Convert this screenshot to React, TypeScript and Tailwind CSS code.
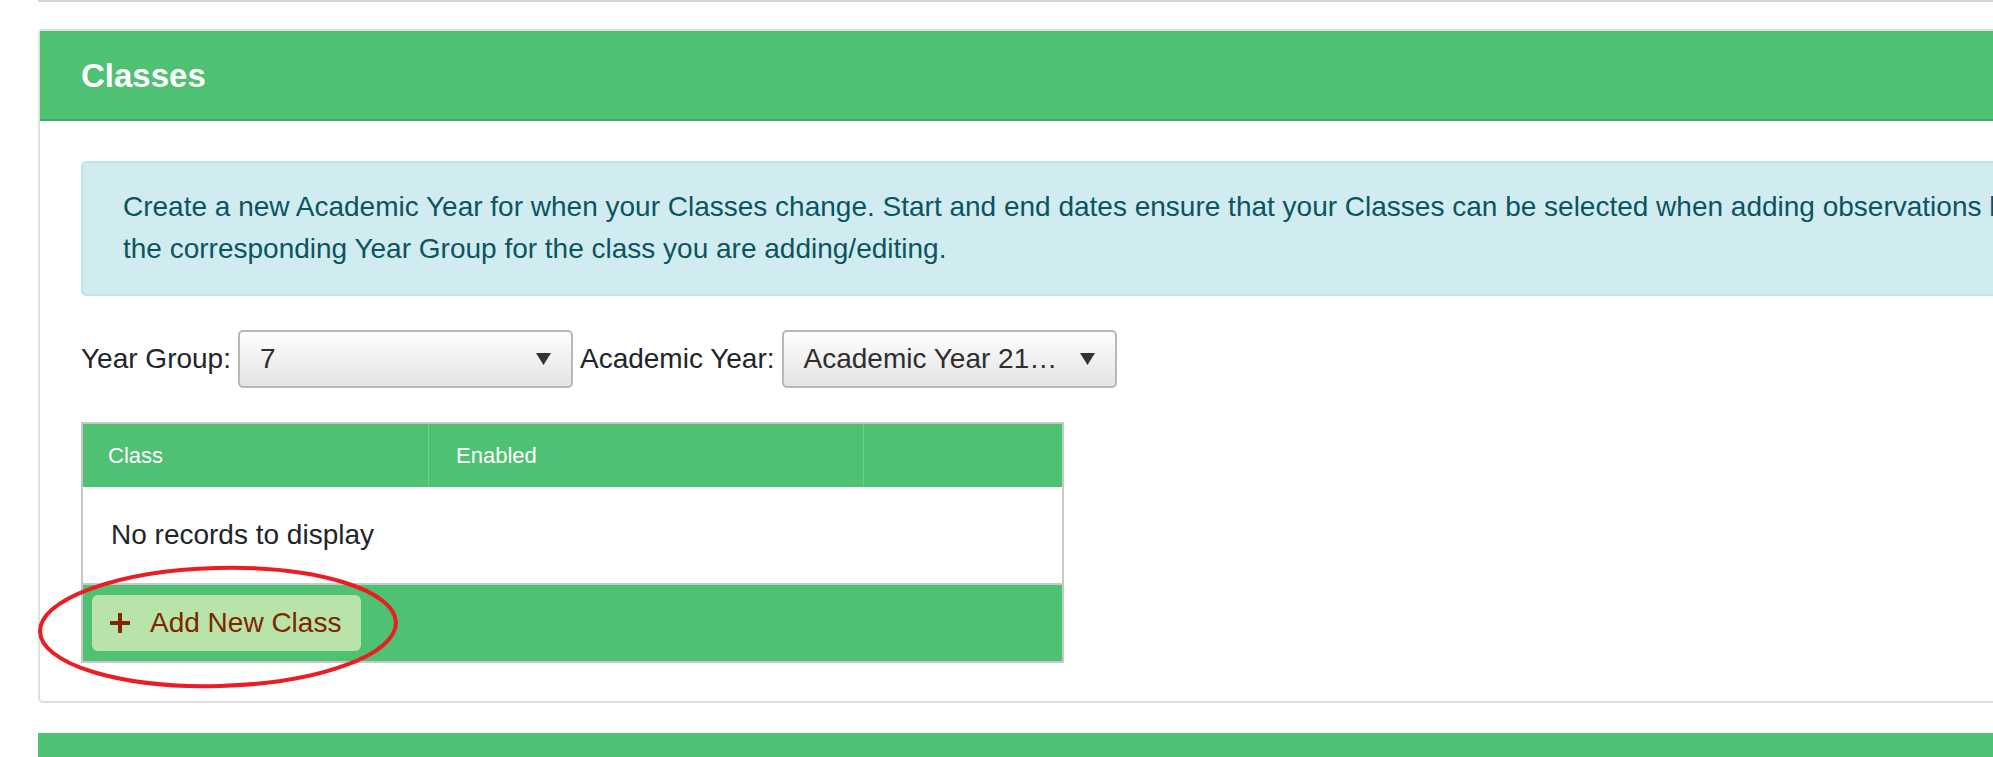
function Caret() {
  return (
    <svg width="15" height="12" viewBox="0 0 15 12" className="shrink-0">
      <polygon points="0,0 15,0 7.5,12" fill="#333333" />
    </svg>
  );
}

function PlusMark() {
  return (
    <svg width="20" height="20" viewBox="0 0 20 20" className="shrink-0">
      <rect x="0" y="8" width="20" height="4" fill="currentColor" />
      <rect x="8" y="0" width="4" height="20" fill="currentColor" />
    </svg>
  );
}

function Select({ value }: { value: string }) {
  return (
    <div className="w-[335px] h-[58px] shrink-0 border-2 border-[#b8b8b8] rounded-[5px] bg-gradient-to-b from-white to-[#e3e3e3] flex items-center justify-between pl-[20px] pr-[20px] text-[#2e2e2e]">
      <span className="whitespace-nowrap">{value}</span>
      <Caret />
    </div>
  );
}

export default function App() {
  return (
    <div className="relative w-[1993px] h-[757px] overflow-hidden bg-white font-['Liberation_Sans',Arial,sans-serif] text-[28px] text-[#212529]">
      {/* line left over from the section above */}
      <div className="ml-[38px] h-[2px] bg-[#d6d6d6]" />

      {/* Classes panel */}
      <div className="mt-[27px] ml-[38px] w-[2100px] border-2 border-[#dfdfdf] rounded-[5px]">
        <div className="h-[90px] flex items-center px-[41px] bg-[#4ec172] border-b-2 border-[#44a863]">
          <h2 className="text-[33px] font-bold text-white leading-none">Classes</h2>
        </div>

        <div className="pt-[40px] pb-[38px] px-[41px]">
          <div className="border-2 border-[#bee5eb] bg-[#d1ecf1] rounded-[5px] text-[#0c5460] leading-[42px] pl-[40px] pt-[23px] pb-[24px] whitespace-nowrap">
            Create a new Academic Year for when your Classes change. Start and end dates ensure that your Classes can be selected when adding observations by selecting
            <br />
            the corresponding Year Group for the class you are adding/editing.
          </div>

          <div className="mt-[34px] flex items-center gap-[7px]">
            <label className="whitespace-nowrap">Year Group:</label>
            <Select value="7" />
            <label className="whitespace-nowrap">Academic Year:</label>
            <Select value="Academic Year 21…" />
          </div>

          <div className="mt-[34px] w-[983px] border-2 border-[#c8c8c8]">
            <div className="h-[63px] grid grid-cols-[345px_435px_1fr] bg-[#4ec172] text-white text-[22px]">
              <div className="flex items-center pl-[25px]">Class</div>
              <div className="flex items-center pl-[27px] border-l border-white/20">Enabled</div>
              <div className="border-l border-white/20" />
            </div>
            <div className="h-[96px] flex items-center pl-[28px] bg-white">No records to display</div>
            <div className="border-t-2 border-[#c8c8c8] bg-[#4ec172] pt-[10px] pb-[10px] pl-[9px]">
              <button className="h-[56px] flex items-center gap-[20px] pl-[18px] pr-[20px] bg-[#b8e4a9] rounded-[6px] text-[28px] text-[#7f2600]">
                <PlusMark />
                <span>Add New Class</span>
              </button>
            </div>
          </div>
        </div>
      </div>

      {/* next panel header peeking in */}
      <div className="mt-[30px] ml-[38px] h-[30px] bg-[#4ec172]" />

      {/* red annotation ring */}
      <svg className="absolute left-0 top-0 pointer-events-none" width="1993" height="757">
        <ellipse
          cx="218"
          cy="627"
          rx="178"
          ry="59"
          fill="none"
          stroke="#ec1c24"
          strokeWidth="4"
          transform="rotate(-1.5 218 627)"
        />
      </svg>
    </div>
  );
}
